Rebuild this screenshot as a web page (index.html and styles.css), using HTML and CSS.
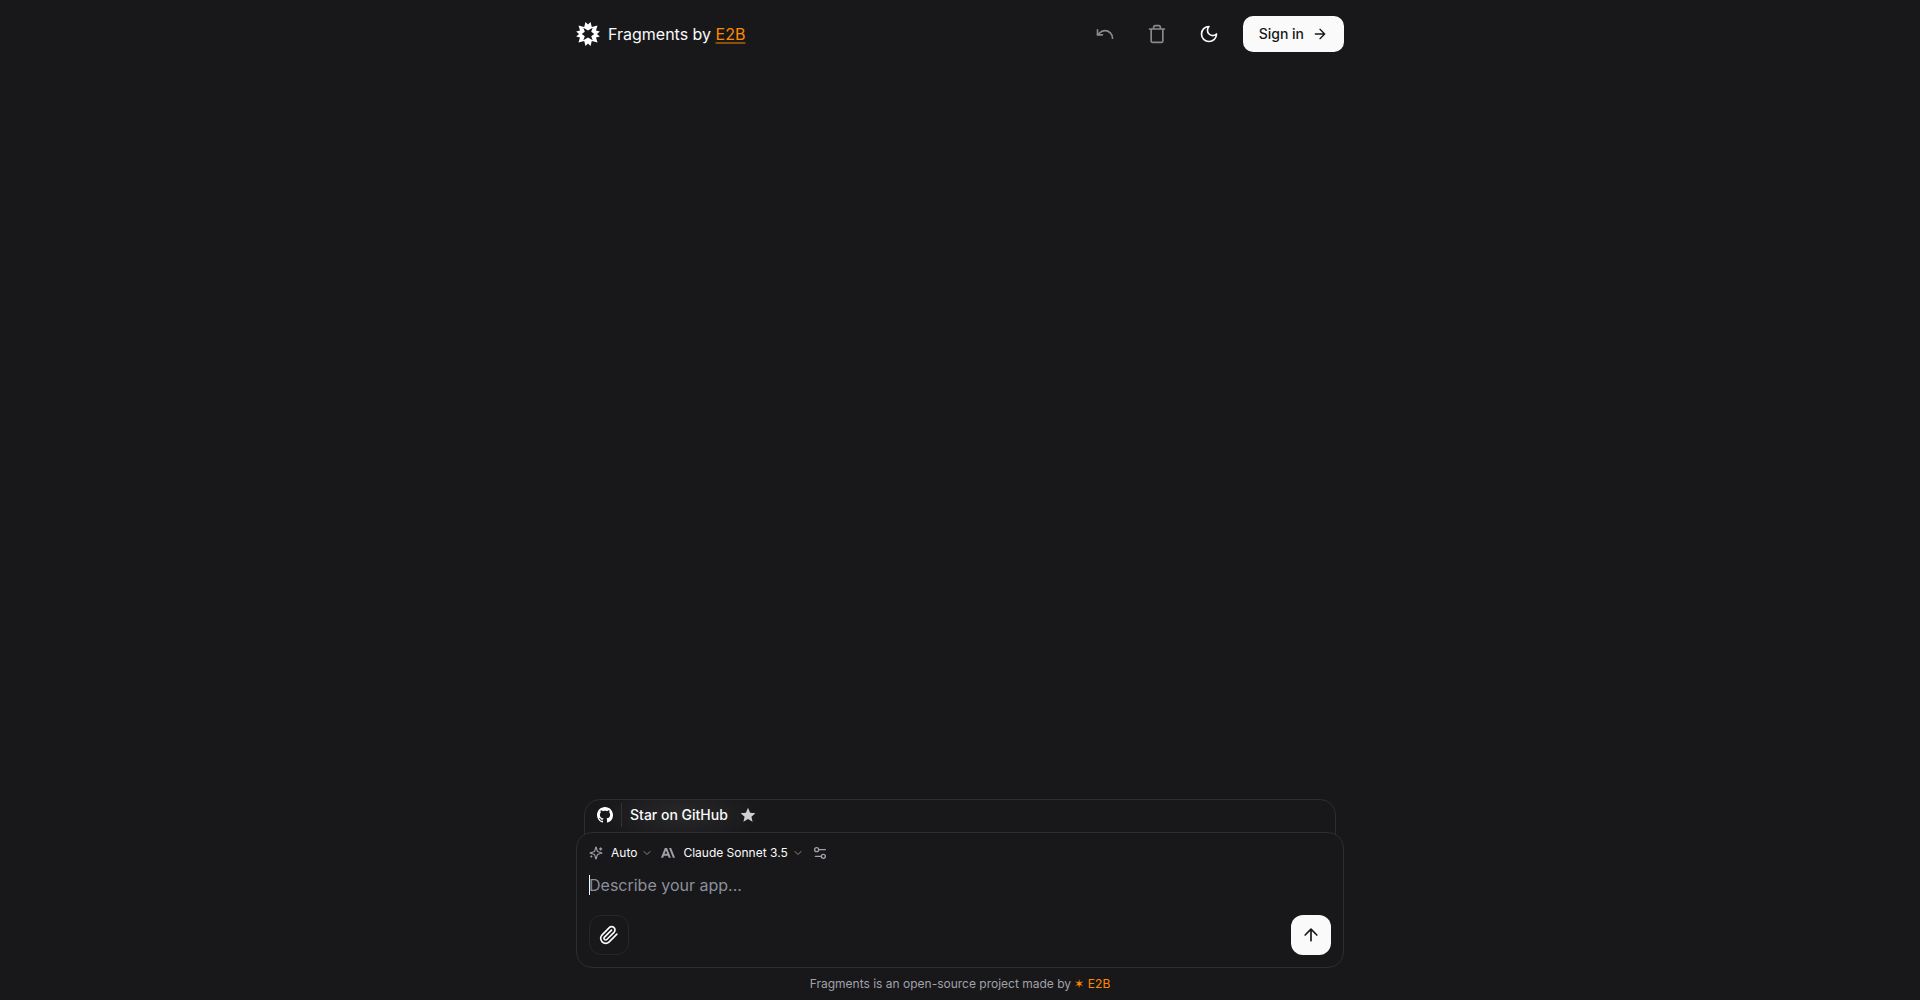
FILE: index.html
```html
<!DOCTYPE html>
<html lang="en">
<head>
<meta charset="utf-8">
<meta name="viewport" content="width=device-width, initial-scale=1">
<title>Fragments by E2B</title>
<link rel="stylesheet" href="styles.css">
</head>
<body>
<div class="page">
  <nav class="navbar">
    <div class="brand">
      <svg class="logo" viewBox="0 0 24 24" aria-hidden="true"><path fill-rule="evenodd" d="M9.500 0 12 2.500 14.500 0 15.800 5 21.500 3.500 20 8.500 23.800 9.500 21 12 23.800 14.500 20 15.500 21.500 20.500 15.800 19 14.500 24 12 21.500 9.500 24 8.200 19 2.500 20.500 4 15.500 .2 14.500 3 12 .2 9.500 4 8.500 2.500 3.500 8.200 5ZM12 8.600 7.300 5.800 8.800 9.800 5.800 12 8.800 14.200 7.300 18.200 12 15.400 16.700 18.200 15.200 14.200 18.200 12 15.200 9.800 16.700 5.800Z"/></svg>
      <h1 class="brand-name">Fragments by <a class="brand-link" href="#">E2B</a></h1>
    </div>
    <div class="actions">
      <button class="icon-button" type="button" aria-label="Undo" disabled><svg class="icon" viewBox="0 0 24 24"><path d="M3 7v6h6"/><path d="M21 17a9 9 0 0 0-9-9 9 9 0 0 0-6 2.300L3 13"/></svg></button>
      <button class="icon-button" type="button" aria-label="Clear chat" disabled><svg class="icon" viewBox="0 0 24 24"><path d="M3 6h18M19 6v14c0 1-1 2-2 2H7c-1 0-2-1-2-2V6M8 6V4c0-1 1-2 2-2h4c1 0 2 1 2 2v2"/></svg></button>
      <button class="icon-button" type="button" aria-label="Toggle theme"><svg class="icon" viewBox="0 0 24 24"><path d="M12 3a6 6 0 0 0 9 9 9 9 0 1 1-9-9Z"/></svg></button>
      <button class="sign-in" type="button">Sign in <svg class="icon icon-small" viewBox="0 0 24 24"><path d="M5 12h14M12 5l7 7-7 7"/></svg></button>
    </div>
  </nav>
  <main class="chat">
    <a class="banner" href="#">
      <svg class="github" viewBox="0 0 16 16" aria-hidden="true"><path d="M8 0C3.580 0 0 3.580 0 8c0 3.540 2.290 6.530 5.470 7.590.4.070.55-.17.55-.38 0-.19-.01-.82-.01-1.490-2.010.37-2.530-.49-2.690-.94-.09-.23-.48-.94-.82-1.130-.28-.15-.68-.52-.01-.53.63-.01 1.080.58 1.230.82.72 1.210 1.870.87 2.330.66.070-.52.28-.87.51-1.070-1.780-.2-3.640-.89-3.640-3.950 0-.87.31-1.590.82-2.150-.08-.2-.36-1.020.08-2.120 0 0 .67-.21 2.200.82.64-.18 1.320-.27 2-.27s1.360.090 2 .27c1.530-1.040 2.200-.82 2.200-.82.44 1.100.16 1.920.08 2.120.51.56.82 1.270.82 2.150 0 3.070-1.870 3.750-3.650 3.950.29.25.54.73.54 1.480 0 1.070-.01 1.930-.01 2.200 0 .21.15.46.55.38A8.010 8.010 0 0 0 16 8c0-4.420-3.580-8-8-8Z"/></svg>
      <span class="divider"></span>
      <span>Star on GitHub</span>
      <svg class="star" viewBox="0 0 16 16" aria-hidden="true"><path d="m8 .8 2.100 4.900 5.300.45-4 3.500 1.200 5.200L8 12.100l-4.600 2.750 1.200-5.200-4-3.500 5.300-.45Z"/></svg>
    </a>
    <form class="composer">
      <div class="pickers">
        <button class="picker" type="button"><svg class="mini" viewBox="0 0 24 24"><path d="M9.940 15.500A2 2 0 0 0 8.500 14.060l-6.140-1.580a.5.5 0 0 1 0-.96L8.500 9.940A2 2 0 0 0 9.940 8.500l1.580-6.140a.5.5 0 0 1 .96 0l1.580 6.140a2 2 0 0 0 1.440 1.440l6.140 1.580a.5.5 0 0 1 0 .96l-6.140 1.580a2 2 0 0 0-1.440 1.440l-1.580 6.140a.5.5 0 0 1-.96 0ZM20 3v4M22 5h-4M4 17v2M5 18H3"/></svg><span>Auto</span><svg class="chevron" viewBox="0 0 24 24"><path d="m6 9 6 6 6-6"/></svg></button>
        <button class="picker" type="button"><svg class="mini anthropic" viewBox="0 0 24 24"><path d="M13.830 3.520h3.600L24 20h-3.600Zm-7.260 0h3.770L16.910 20h-3.680l-1.340-3.460H5.020L3.670 20H0Zm4.130 9.960L8.450 7.690 6.210 13.480Z"/></svg><span>Claude Sonnet 3.5</span><svg class="chevron" viewBox="0 0 24 24"><path d="m6 9 6 6 6-6"/></svg></button>
        <button class="picker" type="button" aria-label="Model settings"><svg class="mini settings" viewBox="0 0 24 24"><path d="M20 7h-9M14 17H5"/><circle cx="17" cy="17" r="3"/><circle cx="7" cy="7" r="3"/></svg></button>
      </div>
      <textarea class="prompt" rows="1" aria-label="Describe your app" placeholder="Describe your app..." autofocus></textarea>
      <div class="toolbar">
        <button class="square attach" type="button" aria-label="Attach files"><svg class="icon" viewBox="0 0 24 24"><path d="m21.440 11.050-9.190 9.190a6 6 0 0 1-8.490-8.490l8.570-8.570A4 4 0 1 1 18 8.840l-8.590 8.570a2 2 0 0 1-2.830-2.830l8.490-8.480"/></svg></button>
        <button class="square send" type="submit" aria-label="Send"><svg class="icon" viewBox="0 0 24 24"><path d="m5 12 7-7 7 7M12 19V5"/></svg></button>
      </div>
    </form>
    <p class="credit">Fragments is an open-source project made by <a class="credit-link" href="#">✶ E2B</a></p>
  </main>
</div>
</body>
</html>
```
FILE: styles.css
```css
* { box-sizing: border-box; }
body {
  margin: 0;
  background: #18181a;
  color: #fafafa;
  font: 16px/24px Inter, "Liberation Sans", sans-serif;
}
button { font: inherit; color: inherit; background: none; border: 0; padding: 0; cursor: pointer; }
a { color: inherit; text-decoration: none; }
.page {
  display: flex;
  flex-direction: column;
  justify-content: space-between;
  width: 100%;
  max-width: 800px;
  min-height: 100vh;
  margin: 0 auto;
  padding: 0 16px;
}
.navbar { display: flex; justify-content: space-between; align-items: center; padding: 16px 0; }
.brand { display: flex; align-items: center; gap: 8px; }
.logo { width: 24px; height: 24px; fill: #fff; }
.brand-name { margin: 0; font-size: 16px; font-weight: 400; }
.brand-link {
  color: #ff8800;
  text-decoration: underline;
  text-decoration-color: #8c4f0a;
  text-decoration-thickness: 2px;
  text-underline-offset: 2px;
}
.actions { display: flex; align-items: center; gap: 16px; }
.icon-button { display: grid; place-items: center; width: 36px; height: 36px; }
.icon-button:disabled { opacity: .5; }
.icon { width: 20px; height: 20px; fill: none; stroke: currentColor; stroke-width: 2; stroke-linecap: round; stroke-linejoin: round; }
.icon-small { width: 16px; height: 16px; }
.sign-in {
  display: flex;
  align-items: center;
  gap: 8px;
  height: 36px;
  padding: 0 16px;
  border-radius: 10px;
  background: #fafafa;
  color: #18181b;
  font-size: 14px;
  font-weight: 500;
}
.banner {
  display: flex;
  align-items: center;
  gap: 8px;
  height: 48px;
  margin: 0 8px -15px;
  padding: 0 12px 16px;
  border: 1px solid #2e2e31;
  border-radius: 16px 16px 0 0;
  background: radial-gradient(ellipse 80px 32px at 96px 14px, #28282a, #18181a);
  font-size: 14px;
  font-weight: 500;
}
.github { width: 16px; height: 16px; fill: #fff; }
.divider { width: 1px; height: 24px; background: #333336; }
.star { width: 16px; height: 16px; margin-left: 4px; fill: #d0d0d0; }
.composer {
  position: relative;
  padding: 12px;
  border: 1px solid #2e2e31;
  border-radius: 16px;
  background: #18181a;
}
.pickers { display: flex; align-items: center; gap: 8px; height: 16px; font-size: 12px; line-height: 16px; }
.picker { display: flex; align-items: center; gap: 8px; }
.mini { width: 14px; height: 14px; fill: none; stroke: #a1a1aa; stroke-width: 2; stroke-linecap: round; stroke-linejoin: round; }
.anthropic { fill: #a1a1aa; stroke: none; }
.settings { width: 16px; height: 16px; }
.chevron { width: 12px; height: 12px; margin-left: -4px; fill: none; stroke: #88888c; stroke-width: 2; stroke-linecap: round; stroke-linejoin: round; }
/* The insertion caret is a 1px background line at the start of the empty field. */
.prompt {
  display: block;
  width: 100%;
  height: 24px;
  margin: 12px 0 18px;
  padding: 0;
  border: 0;
  outline: 0;
  resize: none;
  background: none;
  color: inherit;
  font: inherit;
}
.prompt:placeholder-shown {
  caret-color: transparent;
  background: linear-gradient(#fafafa, #fafafa) 0 2px / 1px 20px no-repeat;
}
.prompt::placeholder { color: #8b8f9a; }
.toolbar { display: flex; justify-content: space-between; }
.square { display: grid; place-items: center; width: 40px; height: 40px; border-radius: 12px; }
.attach { border: 1px solid #27272a; }
.send { background: #fafafa; color: #18181b; }
.credit { margin: 8px 0; text-align: center; font-size: 12px; line-height: 16px; color: #a1a1aa; }
.credit-link { color: #ff8800; }
```
